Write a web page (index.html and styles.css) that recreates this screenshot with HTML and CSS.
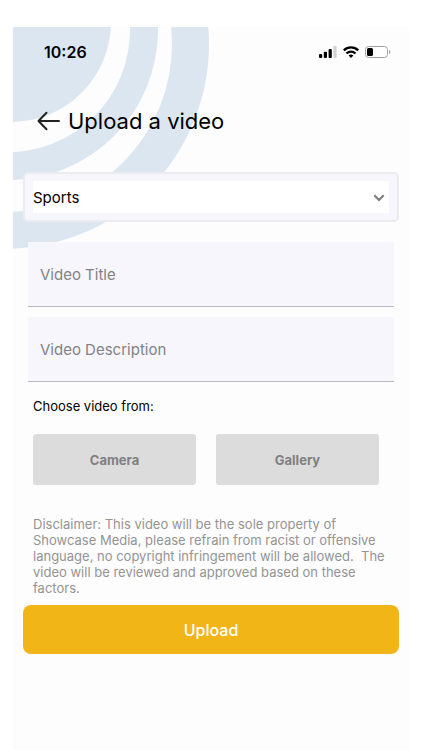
FILE: index.html
```html
<!DOCTYPE html>
<html lang="en">
<head>
<meta charset="utf-8">
<meta name="viewport" content="width=device-width, initial-scale=1">
<title>Upload a video</title>
<link rel="stylesheet" href="styles.css">
</head>
<body>
<div class="screen">
  <svg class="rings" width="200" height="224" viewBox="13 27 200 224" aria-hidden="true">
    <circle cx="11" cy="22" r="100" fill="#dce6f0"/>
    <g fill="none" stroke="#dce6f0">
      <circle cx="8" cy="30" r="136" stroke-width="28"/>
      <circle cx="4" cy="44" r="186.500" stroke-width="37"/>
    </g>
  </svg>

  <div class="status">
    <time class="clock">10:26</time>
    <div class="indicators">
      <svg width="18" height="12" viewBox="0 0 18 12" aria-hidden="true">
        <rect x="0" y="8" width="3.200" height="4" rx="1"/>
        <rect x="4.800" y="5.800" width="3.200" height="6.200" rx="1"/>
        <rect x="9.600" y="3" width="3.200" height="9" rx="1"/>
        <rect x="14.400" y="0" width="3.200" height="12" rx="1" fill="#d2d2d2"/>
      </svg>
      <svg width="16" height="12" viewBox="0 0 16 12" aria-hidden="true">
        <g fill="none" stroke="#000" stroke-width="2.200">
          <path d="M.8 4.400a10.200 10.200 0 0 1 14.400 0"/>
          <path d="M3.500 7.500a6.400 6.400 0 0 1 9 0"/>
        </g>
        <path d="M5.600 9.500a3.600 3.600 0 0 1 4.800 0L8 12z"/>
      </svg>
      <svg width="26" height="12" viewBox="0 0 26 12" aria-hidden="true">
        <rect x=".5" y=".5" width="22" height="11" rx="3" fill="#fff" stroke="#a0a0a0"/>
        <rect x="2" y="2" width="6" height="8" rx="1.500"/>
        <path d="M24 4c1.800.6 1.800 3.400 0 4z" fill="#a0a0a0"/>
      </svg>
    </div>
  </div>

  <header class="heading">
    <button class="back" type="button" aria-label="Back">
      <svg width="24" height="20" viewBox="0 0 24 20" fill="none" stroke="#222" stroke-width="2" stroke-linecap="round" stroke-linejoin="round" aria-hidden="true">
        <path d="M22 10H1.500M9.500 1.800L1.500 10l8 8.200"/>
      </svg>
    </button>
    <h1>Upload a video</h1>
  </header>

  <form class="form">
    <div class="picker">
      <select aria-label="Category">
        <option>Sports</option>
      </select>
      <svg class="chevron" width="12" height="8" viewBox="0 0 12 8" fill="none" stroke="#7b7b7b" stroke-width="2" aria-hidden="true">
        <path d="M1.300 1.300L6 6l4.700-4.700"/>
      </svg>
    </div>

    <div class="fields">
      <input type="text" placeholder="Video Title" aria-label="Video Title">
      <input type="text" placeholder="Video Description" aria-label="Video Description">
    </div>

    <p class="prompt" id="source">Choose video from:</p>
    <div class="sources" role="group" aria-labelledby="source">
      <button type="button">Camera</button>
      <button type="button">Gallery</button>
    </div>

    <p class="disclaimer">Disclaimer: This video will be the sole property of Showcase Media, please refrain from racist or offensive language, no copyright infringement will be allowed.&nbsp; The video will be reviewed and approved based on these factors.</p>

    <button class="upload" type="submit">Upload</button>
  </form>
</div>
</body>
</html>
```
FILE: styles.css
```css
* {
  box-sizing: border-box;
}

body {
  margin: 0;
  padding: 27px 13px 0;
  background: #fff;
  color: #000;
  font-family: Inter, "Liberation Sans", sans-serif;
}

button,
input,
select {
  font: inherit;
}

.screen {
  position: relative;
  min-height: calc(100vh - 27px);
  padding: 0 10px;
  background: #fdfdfd;
}

.rings {
  position: absolute;
  top: 0;
  left: 0;
}

.status,
.heading,
.form {
  position: relative;
}

.status {
  display: flex;
  align-items: center;
  justify-content: space-between;
  height: 50px;
  padding: 0 8px 0 21px;
}

.clock {
  font-size: 16px;
  font-weight: 600;
}

.indicators {
  display: flex;
  gap: 6px;
}

.heading {
  display: flex;
  align-items: center;
  gap: 7px;
  height: 68px;
  margin-bottom: 27px;
  padding: 20px 0 0 14px;
}

.back {
  display: flex;
  padding: 0;
  border: 0;
  background: none;
}

h1 {
  margin: 0;
  font-size: 22px;
  font-weight: 400;
  line-height: 32px;
}

.picker {
  position: relative;
  padding: 7px 8px;
  border: 2px solid #ebebf0;
  border-radius: 5px;
  background: #f7f6fd;
}

.picker select {
  display: block;
  width: 100%;
  height: 32px;
  padding: 0;
  border: 0;
  border-radius: 0;
  background: #fff;
  color: #000;
  font-size: 15px;
  appearance: none;
}

.chevron {
  position: absolute;
  top: 20px;
  right: 12px;
  pointer-events: none;
}

.fields {
  display: grid;
  gap: 10px;
  margin: 20px 5px 16px;
}

.fields input {
  width: 100%;
  height: 65px;
  padding: 0 12px;
  border: 0;
  border-bottom: 1px solid #b9b9c2;
  border-radius: 0;
  background: #f7f6fd;
  font-size: 15px;
}

.fields input::placeholder {
  color: #828286;
  opacity: 1;
}

.prompt {
  margin: 0 10px 20px;
  font-size: 13px;
  line-height: 16px;
}

.sources {
  display: grid;
  grid-template-columns: 1fr 1fr;
  gap: 20px;
  margin: 0 20px 31px 10px;
}

.sources button {
  height: 51px;
  padding: 0;
  border: 0;
  border-radius: 3px;
  background: #dcdcdc;
  color: #808080;
  font-size: 13px;
  font-weight: 700;
}

.disclaimer {
  margin: 0 10px 9px;
  color: #949494;
  font-size: 13px;
  line-height: 16px;
}

.upload {
  display: block;
  width: 100%;
  height: 49px;
  padding: 0;
  border: 0;
  border-radius: 8px;
  background: #f1b518;
  color: #fff;
  font-size: 16px;
  font-weight: 500;
}
```
